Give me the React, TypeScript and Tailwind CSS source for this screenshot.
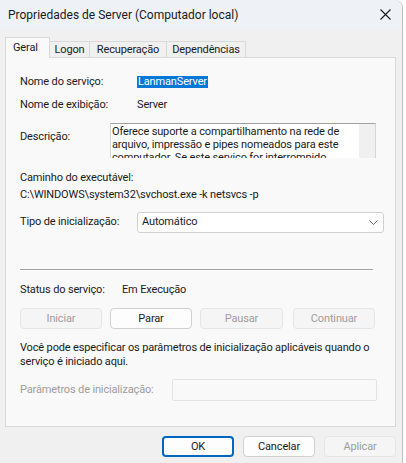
export default function App() {
  const btn = "h-[21px] rounded-[4px] border text-center leading-[19px]";
  const on = "border-[#d0d0d0] bg-[#fdfdfd] text-[#1a1a1a]";
  const off = "border-[#e5e5e5] bg-[#f5f5f5] text-[#9d9d9d]";
  const tab = "h-[16px] border border-b-0 border-l-0 border-[#d9d9d9] bg-[#f0f0f0] text-center leading-[16px]";

  return (
    <div className="flex h-[463px] w-[406px] bg-white font-[Roboto,sans-serif] text-[11px] text-[#1a1a1a]">
      <div className="flex w-[403px] flex-col rounded-tr-[8px] border-r border-[#bfbfbf] bg-[#f0f0f0]">
        {/* title bar */}
        <div className="flex h-[29px] shrink-0 items-center justify-between rounded-tr-[8px] bg-[#eef2f7] pl-[8px] pr-[10px]">
          <span className="text-[12px] text-[#1a1a1a]">Propriedades de Server (Computador local)</span>
          <svg width="11" height="11" viewBox="0 0 11 11" className="mr-[1px]">
            <path d="M0.5 0.5 L10.5 10.5 M10.5 0.5 L0.5 10.5" stroke="#1a1a1a" strokeWidth="1.1" fill="none" />
          </svg>
        </div>

        <div className="flex flex-col pl-[5px] pt-[8px] tracking-[-0.15px]">
          {/* tabs */}
          <div className="flex items-end">
            <div className="relative z-10 -mb-px h-[21px] w-[45px] border border-b-0 border-[#d9d9d9] bg-[#f9f9f9] pl-[7px] leading-[19px]">
              Geral
            </div>
            <div className={`${tab} w-[40px]`}>Logon</div>
            <div className={`${tab} w-[77px]`}>Recuperação</div>
            <div className={`${tab} w-[79px]`}>Dependências</div>
          </div>

          {/* panel */}
          <div className="flex h-[370px] w-[391px] flex-col border border-[#d9d9d9] bg-[#f9f9f9] pl-[14px]">
            <div className="mt-[17px] flex h-[14px] items-center">
              <span className="w-[117px]">Nome do serviço:</span>
              <span className="bg-[#0078d7] px-px leading-[12px] text-white">LanmanServer</span>
            </div>
            <div className="mt-[9px] flex h-[14px] items-center">
              <span className="w-[117px]">Nome de exibição:</span>
              <span>Server</span>
            </div>

            <div className="mt-[11px] flex">
              <span className="mt-[6px] w-[90px]">Descrição:</span>
              <div className="flex h-[35px] w-[266px] overflow-hidden border border-b-0 border-t-[#a0a0a0] border-x-[#d5d5d5] bg-white">
                <div className="flex-1 overflow-hidden pl-[1px] pt-[1px] leading-[13px]">
                  <div className="whitespace-nowrap">Oferece suporte a compartilhamento na rede de</div>
                  <div className="whitespace-nowrap">arquivo, impressão e pipes nomeados para este</div>
                  <div className="whitespace-nowrap">computador. Se este serviço for interrompido,</div>
                </div>
                <div className="w-[16px] bg-[#f0f0f0]" />
              </div>
            </div>

            <div className="mt-[13px] h-[14px] leading-[14px]">Caminho do executável:</div>
            <div className="mt-[3px] h-[14px] leading-[14px]">C:\WINDOWS\system32\svchost.exe -k netsvcs -p</div>

            <div className="mt-[10px] flex items-center">
              <span className="w-[117px]">Tipo de inicialização:</span>
              <div className="flex h-[21px] w-[247px] items-center justify-between rounded-[3px] border border-[#d0d0d0] bg-white pl-[4px] pr-[5px]">
                <span>Automático</span>
                <svg width="9" height="5" viewBox="0 0 9 5">
                  <path d="M0.5 0.5 L4.5 4.5 L8.5 0.5" stroke="#6b6b6b" strokeWidth="1" fill="none" />
                </svg>
              </div>
            </div>

            <div className="mt-[36px] w-[353px] border-t border-b border-t-[#a0a0a0] border-b-white" />

            <div className="mt-[12px] flex h-[14px] items-center">
              <span className="w-[102px]">Status do serviço:</span>
              <span>Em Execução</span>
            </div>

            <div className="mt-[11px] flex">
              <div className={`${btn} ${off} w-[82px]`}>Iniciar</div>
              <div className={`${btn} ${on} ml-[8px] w-[82px]`}>Parar</div>
              <div className={`${btn} ${off} ml-[8px] w-[83px]`}>Pausar</div>
              <div className={`${btn} ${off} ml-[10px] w-[82px]`}>Continuar</div>
            </div>

            <div className="mt-[12px] leading-[14px]">
              <div>Você pode especificar os parâmetros de inicialização aplicáveis quando o</div>
              <div>serviço é iniciado aqui.</div>
            </div>

            <div className="mt-[10px] flex items-center">
              <span className="w-[152px] text-[#9d9d9d]">Parâmetros de inicialização:</span>
              <div className="h-[22px] w-[205px] rounded-[2px] border border-[#e3e3e3] bg-[#f9f9f9]" />
            </div>
          </div>

          {/* dialog buttons */}
          <div className="mt-[9px] flex w-[391px] justify-end gap-[9px]">
            <div className="h-[21px] w-[72px] rounded-[4px] border-2 border-[#0067c0] bg-[#fdfdfd] text-center leading-[17px]">
              OK
            </div>
            <div className={`${btn} ${on} w-[72px]`}>Cancelar</div>
            <div className={`${btn} ${off} w-[72px]`}>Aplicar</div>
          </div>
        </div>
      </div>
    </div>
  );
}
